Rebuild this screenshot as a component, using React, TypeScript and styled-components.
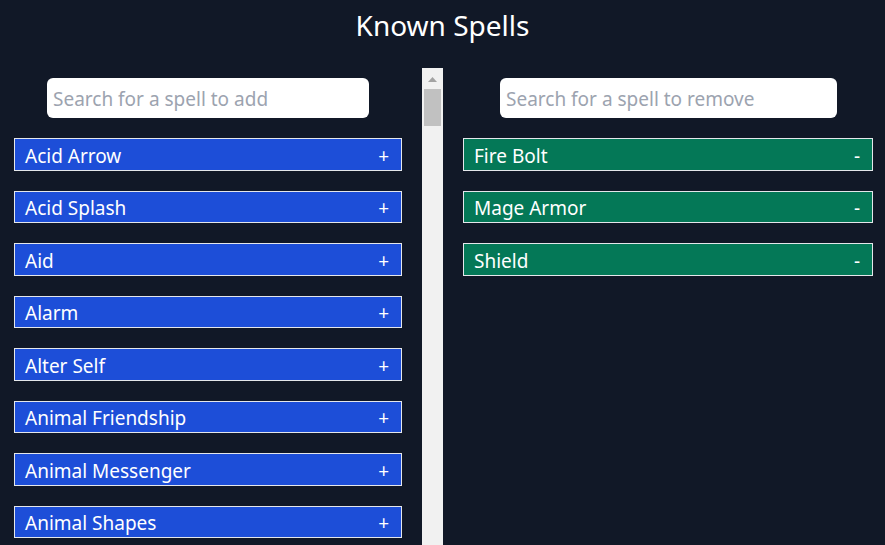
import React from "react";
import styled, { createGlobalStyle } from "styled-components";

const GlobalStyle = createGlobalStyle`
  html, body {
    margin: 0;
    padding: 0;
    background: #111827;
    overflow: hidden;
  }
  body {
    font-family: "Noto Sans", "Open Sans", sans-serif;
    color: #ffffff;
  }
  * { box-sizing: border-box; }
`;

const Page = styled.div`
  width: 885px;
  height: 545px;
  display: flex;
  flex-direction: column;
  background: #111827;
  overflow: hidden;
`;

const Header = styled.h1`
  margin: 0;
  height: 68px;
  padding-top: 5px;
  text-align: center;
  font-size: 28px;
  font-weight: 400;
  line-height: 40px;
  color: #ffffff;
`;

const Columns = styled.div`
  flex: 1;
  display: grid;
  grid-template-columns: 443px 442px;
  min-height: 0;
`;

const LeftColumn = styled.div`
  display: grid;
  grid-template-columns: 422px 21px;
  min-height: 0;
  height: 477px;
`;

const ScrollPane = styled.div`
  height: 477px;
  overflow-y: scroll;
  padding: 10px 0 20px 0;
  scrollbar-width: none;
  &::-webkit-scrollbar {
    display: none;
  }
`;

const ScrollRail = styled.div`
  display: flex;
  flex-direction: column;
  align-items: center;
  background: #f1f1f1;
  height: 477px;
`;

const ScrollArrow = styled.div`
  height: 21px;
  width: 21px;
  display: flex;
  align-items: flex-start;
  justify-content: center;
  padding-top: 9px;
`;

const ScrollThumb = styled.div`
  width: 17px;
  height: 37px;
  background: #c1c1c1;
`;

const StaticPane = styled.div`
  padding: 10px 0 20px 0;
`;

const SearchInput = styled.input<{ $left: number; $width: number }>`
  display: block;
  margin-left: ${(p) => p.$left}px;
  width: ${(p) => p.$width}px;
  height: 40px;
  border: none;
  border-radius: 6px;
  background: #ffffff;
  padding: 2px 6px 0 6px;
  font-family: "Noto Sans", "Open Sans", sans-serif;
  font-size: 19px;
  color: #111827;
  outline: none;
  &::placeholder {
    color: #9ca3af;
  }
`;

const SpellRow = styled.div<{ $variant: "add" | "remove"; $left: number; $width: number }>`
  display: flex;
  align-items: center;
  justify-content: space-between;
  margin-top: 20px;
  margin-left: ${(p) => p.$left}px;
  width: ${(p) => p.$width}px;
  height: 32.5px;
  padding: 3px 12px 0 10px;
  border: 1px solid #e5e7eb;
  background: ${(p) => (p.$variant === "add" ? "#1d4ed8" : "#047857")};
  color: #ffffff;
  font-size: 19px;
  cursor: pointer;
`;

const SpellName = styled.span`
  white-space: nowrap;
`;

const Sign = styled.span`
  font-size: 19px;
`;

const available = [
  "Acid Arrow", "Acid Splash", "Aid", "Alarm", "Alter Self", "Animal Friendship",
  "Animal Messenger", "Animal Shapes", "Animate Dead", "Animate Objects", "Antilife Shell",
  "Antimagic Field", "Antipathy/Sympathy", "Arcane Eye", "Arcane Hand", "Arcane Lock",
  "Arcane Sword", "Arcanist's Magic Aura", "Astral Projection", "Augury", "Awaken", "Bane",
  "Banishment", "Barkskin", "Beacon of Hope", "Bestow Curse", "Black Tentacles",
  "Blade Barrier", "Bless", "Blight", "Blindness/Deafness", "Blink", "Blur", "Branding Smite",
  "Burning Hands", "Call Lightning", "Calm Emotions", "Chain Lightning", "Charm Person",
  "Chill Touch", "Circle of Death", "Clairvoyance", "Clone", "Cloudkill", "Color Spray",
  "Command", "Commune", "Commune with Nature", "Comprehend Languages", "Compulsion",
  "Cone of Cold", "Confusion", "Conjure Animals", "Conjure Celestial", "Conjure Elemental",
  "Conjure Fey", "Conjure Minor Elementals", "Conjure Woodland Beings", "Contact Other Plane",
  "Contagion", "Contingency", "Continual Flame", "Control Water", "Control Weather",
  "Counterspell", "Create Food and Water", "Create or Destroy Water", "Create Undead",
  "Creation", "Cure Wounds", "Dancing Lights", "Darkness", "Darkvision", "Daylight",
  "Death Ward", "Delayed Blast Fireball", "Demiplane", "Detect Evil and Good", "Detect Magic",
  "Detect Poison and Disease", "Detect Thoughts", "Dimension Door", "Disguise Self",
  "Disintegrate", "Dispel Evil and Good", "Dispel Magic", "Divination", "Divine Favor",
  "Divine Word", "Dominate Beast", "Dominate Monster", "Dominate Person", "Dream",
  "Druidcraft", "Earthquake", "Eldritch Blast", "Enhance Ability", "Enlarge/Reduce",
  "Entangle", "Enthrall", "Etherealness", "Expeditious Retreat", "Eyebite", "Fabricate",
  "Faerie Fire", "Faithful Hound", "False Life", "Fear", "Feather Fall", "Feeblemind",
];

const known = ["Fire Bolt", "Mage Armor", "Shield"];

export default function App() {
  return (
    <>
      <GlobalStyle />
      <Page>
        <Header>Known Spells</Header>
        <Columns>
          <LeftColumn>
            <ScrollPane>
              <SearchInput $left={47} $width={322} placeholder="Search for a spell to add" />
              {available.map((s) => (
                <SpellRow key={s} $variant="add" $left={14} $width={388}>
                  <SpellName>{s}</SpellName>
                  <Sign>+</Sign>
                </SpellRow>
              ))}
            </ScrollPane>
            <ScrollRail>
              <ScrollArrow>
                <svg width="9" height="5" viewBox="0 0 9 5">
                  <polygon points="4.5,0 9,5 0,5" fill="#a3a3a3" />
                </svg>
              </ScrollArrow>
              <ScrollThumb />
            </ScrollRail>
          </LeftColumn>
          <StaticPane>
            <SearchInput $left={57} $width={337} placeholder="Search for a spell to remove" />
            {known.map((s) => (
              <SpellRow key={s} $variant="remove" $left={20} $width={410}>
                <SpellName>{s}</SpellName>
                <Sign>-</Sign>
              </SpellRow>
            ))}
          </StaticPane>
        </Columns>
      </Page>
    </>
  );
}
